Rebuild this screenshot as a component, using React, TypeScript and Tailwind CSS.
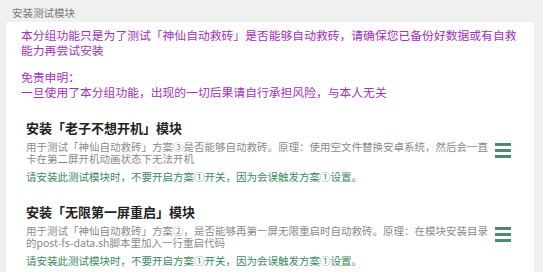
import React from 'react';

type Module = {
  title: string;
  desc: string;
  warn: string;
};

const modules: Module[] = [
  {
    title: '安装「老子不想开机」模块',
    desc: '用于测试「神仙自动救砖」方案③是否能够自动救砖。原理：使用空文件替换安卓系统，然后会一直卡在第二屏开机动画状态下无法开机',
    warn: '请安装此测试模块时，不要开启方案①开关，因为会误触发方案①设置。',
  },
  {
    title: '安装「无限第一屏重启」模块',
    desc: '用于测试「神仙自动救砖」方案②，是否能够再第一屏无限重启时自动救砖。原理：在模块安装目录的post-fs-data.sh脚本里加入一行重启代码',
    warn: '请安装此测试模块时，不要开启方案①开关，因为会误触发方案①设置。',
  },
];

const MenuIcon: React.FC = () => (
  <svg width="16" height="15" viewBox="0 0 16 15" className="shrink-0">
    <rect x="0" y="0" width="16" height="3" fill="#4a8c70" />
    <rect x="0" y="6" width="16" height="3" fill="#4a8c70" />
    <rect x="0" y="12" width="16" height="3" fill="#4a8c70" />
  </svg>
);

const App: React.FC = () => {
  return (
    <div
      className="h-[272px] overflow-hidden bg-[#f0f0f0]"
      style={{ fontFamily: '"Noto Sans CJK SC", "Noto Sans", sans-serif' }}
    >
      {/* Section header */}
      <div className="pl-[12px] pt-[6px] h-[22px] text-[10.5px] leading-[14px] text-[#777777]">
        安装测试模块
      </div>

      {/* Card */}
      <div className="ml-[6px] w-[528px] h-[260px] rounded-[3px] bg-white">
        <div className="pl-[15px] pt-[5px] w-[520px] text-[11.8px] leading-[15px] text-[#a032bd]">
          <p>
            本分组功能只是为了测试「神仙自动救砖」是否能够自动救砖，请确保您已备份好数据或有自救能力再尝试安装
          </p>
          <p className="mt-[11.5px]">免责申明：</p>
          <p>一旦使用了本分组功能，出现的一切后果请自行承担风险，与本人无关</p>
        </div>

        <div className="mt-[10px] flex flex-col">
          {modules.map((m) => (
            <div key={m.title} className="flex items-center pl-[20px] pr-[23px] py-[10px]">
              <div className="w-[469px]">
                <h3 className="text-[13px] leading-[18px] font-bold text-[#222222]">{m.title}</h3>
                <p className="mt-[4px] w-[467px] text-[10.5px] leading-[12.5px] text-[#8a8a8a]">
                  {m.desc}
                </p>
                <p className="mt-[4px] text-[10.5px] leading-[13px] text-[#3b8a5e]">{m.warn}</p>
              </div>
              <MenuIcon />
            </div>
          ))}
        </div>
      </div>
    </div>
  );
};

export default App;
